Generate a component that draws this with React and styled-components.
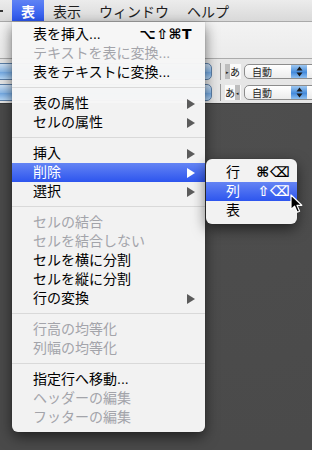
import React from "react";
import styled, { createGlobalStyle } from "styled-components";

const Global = createGlobalStyle`
  html, body {
    margin: 0;
    padding: 0;
    background: #4b4b4b;
  }
  body {
    font-family: "Liberation Sans", "Noto Sans CJK JP", sans-serif;
  }
`;

//メニューの中身
const MENU = [
  { label: "表を挿入...", shortcut: "⌥⇧⌘T" },
  { label: "テキストを表に変換...", disabled: true },
  { label: "表をテキストに変換..." },
  "sep",
  { label: "表の属性", sub: true },
  { label: "セルの属性", sub: true },
  "sep",
  { label: "挿入", sub: true },
  {
    label: "削除",
    sub: true,
    active: true,
    children: [
      { label: "行", shortcut: "⌘⌫" },
      { label: "列", shortcut: "⇧⌫", active: true },
      { label: "表" },
    ],
  },
  { label: "選択", sub: true },
  "sep",
  { label: "セルの結合", disabled: true },
  { label: "セルを結合しない", disabled: true },
  { label: "セルを横に分割" },
  { label: "セルを縦に分割" },
  { label: "行の変換", sub: true },
  "sep",
  { label: "行高の均等化", disabled: true },
  { label: "列幅の均等化", disabled: true },
  "sep",
  { label: "指定行へ移動..." },
  { label: "ヘッダーの編集", disabled: true },
  { label: "フッターの編集", disabled: true },
];

const BAR_ITEMS = ["表", "表示", "ウィンドウ", "ヘルプ"];

const Arrow = ({ color }) => (
  <svg width="8" height="10" viewBox="0 0 8 10">
    <path d="M0 0 L8 5 L0 10 Z" fill={color} />
  </svg>
);

const Cursor = () => (
  <CursorWrap>
    <svg width="13" height="20" viewBox="0 0 13 20">
      <path
        d="M1 1 L1 15.5 L4.6 12.2 L7.2 18.2 L9.6 17.2 L7 11.3 L11.8 11.3 Z"
        fill="#000"
        stroke="#fff"
        strokeWidth="1.2"
        strokeLinejoin="round"
      />
    </svg>
  </CursorWrap>
);

const StepArrows = () => (
  <svg width="7" height="11" viewBox="0 0 7 11">
    <path d="M3.5 0.5 L6.5 4.5 L0.5 4.5 Z" fill="#1a1a1a" />
    <path d="M0.5 6.5 L6.5 6.5 L3.5 10.5 Z" fill="#1a1a1a" />
  </svg>
);

const ControlRow = ({ second }) => (
  <Row>
    <WideButton />
    <Divider />
    <DirToggle>
      {second ? (
        <>
          <span>あ</span>
          <Tab>◂</Tab>
        </>
      ) : (
        <>
          <Tab>▸</Tab>
          <span>あ</span>
        </>
      )}
    </DirToggle>
    <Popup>
      <span>自動</span>
      <Stepper>
        <StepArrows />
      </Stepper>
    </Popup>
  </Row>
);

const App = () => {
  return (
    <Screen>
      <Global />
      <MenuBar>
        <CutMark />
        {BAR_ITEMS.map((t, i) => (
          <BarItem key={t} $active={i === 0}>
            {t}
          </BarItem>
        ))}
      </MenuBar>
      <Toolbar />
      <Controls>
        <ControlRow />
        <ControlRow second />
      </Controls>
      <Workspace />

      <Menu>
        {MENU.map((item, i) =>
          item === "sep" ? (
            <Sep key={i} />
          ) : (
            <Item key={i} $disabled={item.disabled} $active={item.active}>
              <span>{item.label}</span>
              {item.shortcut && <Shortcut>{item.shortcut}</Shortcut>}
              {item.sub && (
                <ArrowBox>
                  <Arrow color={item.active ? "#fff" : "#5b5b5b"} />
                </ArrowBox>
              )}
              {item.children && (
                <SubMenu>
                  {item.children.map((c) => (
                    <SubItem key={c.label} $active={c.active}>
                      <span>{c.label}</span>
                      {c.shortcut && <Shortcut>{c.shortcut}</Shortcut>}
                    </SubItem>
                  ))}
                </SubMenu>
              )}
            </Item>
          )
        )}
      </Menu>
      <Cursor />
    </Screen>
  );
};
export default App;

const Screen = styled.div`
  position: relative;
  width: 312px;
  height: 450px;
  overflow: hidden;
  display: flex;
  flex-direction: column;
  background: #4b4b4b;
`;

const MenuBar = styled.div`
  height: 22px;
  flex-shrink: 0;
  display: flex;
  align-items: stretch;
  background: linear-gradient(#ececec, #d9d9d9);
  box-sizing: border-box;
  border-bottom: 1px solid #a9a9a9;
  font-family: "Liberation Sans", "Noto Sans CJK JP", sans-serif;
  font-size: 14px;
  color: #1e1e1e;
`;

const CutMark = styled.div`
  width: 3px;
  height: 2px;
  margin: 10px 9px 0 0;
  background: #333;
`;

const BarItem = styled.div`
  display: flex;
  align-items: center;
  padding: 0 9px;
  color: ${(p) => (p.$active ? "#fff" : "#1e1e1e")};
  font-weight: ${(p) => (p.$active ? 700 : 400)};
  background: ${(p) =>
    p.$active ? "linear-gradient(#5f83f4, #2a55ee)" : "transparent"};
`;

const Toolbar = styled.div`
  height: 36px;
  flex-shrink: 0;
  background: linear-gradient(#f3f3f3, #ebebeb);
  border-bottom: 1px solid #ababab;
`;

const Controls = styled.div`
  height: 45px;
  flex-shrink: 0;
  box-sizing: border-box;
  padding-top: 4px;
  display: flex;
  flex-direction: column;
  gap: 4px;
  background: #e6e6e6;
  border-bottom: 1px solid #3a3a3a;
`;

const Row = styled.div`
  height: 17px;
  display: flex;
  align-items: center;
`;

const WideButton = styled.div`
  width: 222px;
  height: 17px;
  margin-left: -10px;
  flex-shrink: 0;
  border-radius: 5px;
  box-sizing: border-box;
  border: 1px solid #5b7fa8;
  background: linear-gradient(#cfe2f6, #8ebbe9 50%, #6ea6e2 51%, #b5d7f7);
`;

const Divider = styled.div`
  width: 1px;
  height: 17px;
  margin-left: 8px;
  background: #9a9a9a;
  flex-shrink: 0;
`;

const DirToggle = styled.div`
  display: flex;
  align-items: center;
  margin-left: 4px;
  height: 15px;
  width: 16px;
  flex-shrink: 0;
  background: #fafafa;
  font-family: "Noto Sans CJK JP", sans-serif;
  font-size: 10px;
  line-height: 15px;
  color: #111;
`;

const Tab = styled.span`
  width: 5px;
  height: 15px;
  background: #bdbdbd;
  font-size: 5px;
  line-height: 15px;
  text-align: center;
  color: #222;
`;

const Popup = styled.div`
  margin-left: 3px;
  width: 80px;
  height: 15px;
  flex-shrink: 0;
  box-sizing: border-box;
  border: 1px solid #8c8c8c;
  border-radius: 5px;
  background: linear-gradient(#ffffff, #ececec);
  display: flex;
  align-items: center;
  padding-left: 7px;
  font-family: "Noto Sans CJK JP", sans-serif;
  font-size: 10px;
  color: #222;
  overflow: hidden;
  span {
    flex: 1;
  }
`;

const Stepper = styled.div`
  width: 16px;
  height: 13px;
  margin-right: 16px;
  background: linear-gradient(#9fc8f1, #4f92dd 50%, #3a83d9 51%, #8fc0f0);
  display: flex;
  align-items: center;
  justify-content: center;
`;

const Workspace = styled.div`
  flex: 1;
  background: radial-gradient(ellipse at 80% 0%, #4e4e4e 0%, #4a4a4a 70%);
`;

const Menu = styled.div`
  position: absolute;
  top: 22px;
  left: 12px;
  width: 193px;
  box-sizing: border-box;
  padding: 3px 0 5px;
  background: rgba(246, 246, 246, 0.98);
  border-radius: 0 0 6px 6px;
  box-shadow: 0 5px 14px rgba(0, 0, 0, 0.55), 0 0 1px rgba(0, 0, 0, 0.4);
  font-family: "Liberation Sans", "Noto Sans CJK JP", sans-serif;
  font-size: 14px;
  z-index: 2;
`;

const Item = styled.div`
  position: relative;
  height: 19px;
  line-height: 19px;
  display: flex;
  align-items: center;
  justify-content: space-between;
  padding: 0 13px 0 21px;
  color: ${(p) => (p.$disabled ? "#a3a4aa" : p.$active ? "#fff" : "#000")};
  background: ${(p) =>
    p.$active ? "linear-gradient(#6484f4, #2d55ee)" : "transparent"};
  white-space: nowrap;
`;

const Shortcut = styled.span`
  font-family: "DejaVu Sans", sans-serif;
  font-size: 14px;
  font-weight: 700;
  letter-spacing: 0.5px;
`;

const ArrowBox = styled.span`
  display: flex;
  align-items: center;
  margin-right: -3px;
`;

const Sep = styled.div`
  height: 1px;
  margin: 5px 0 6px;
  background: #d9d9d9;
`;

const SubMenu = styled.div`
  position: absolute;
  top: -4px;
  left: 194px;
  width: 91px;
  padding: 4px 0;
  background: rgba(246, 246, 246, 0.98);
  border-radius: 6px;
  box-shadow: 0 5px 14px rgba(0, 0, 0, 0.55), 0 0 1px rgba(0, 0, 0, 0.4);
`;

const SubItem = styled.div`
  height: 19px;
  line-height: 19px;
  display: flex;
  align-items: center;
  justify-content: space-between;
  padding: 0 7px 0 20px;
  color: ${(p) => (p.$active ? "#fff" : "#000")};
  background: ${(p) =>
    p.$active ? "linear-gradient(#6484f4, #2d55ee)" : "transparent"};
`;

const CursorWrap = styled.div`
  position: absolute;
  left: 290px;
  top: 194px;
  z-index: 5;
  line-height: 0;
`;
